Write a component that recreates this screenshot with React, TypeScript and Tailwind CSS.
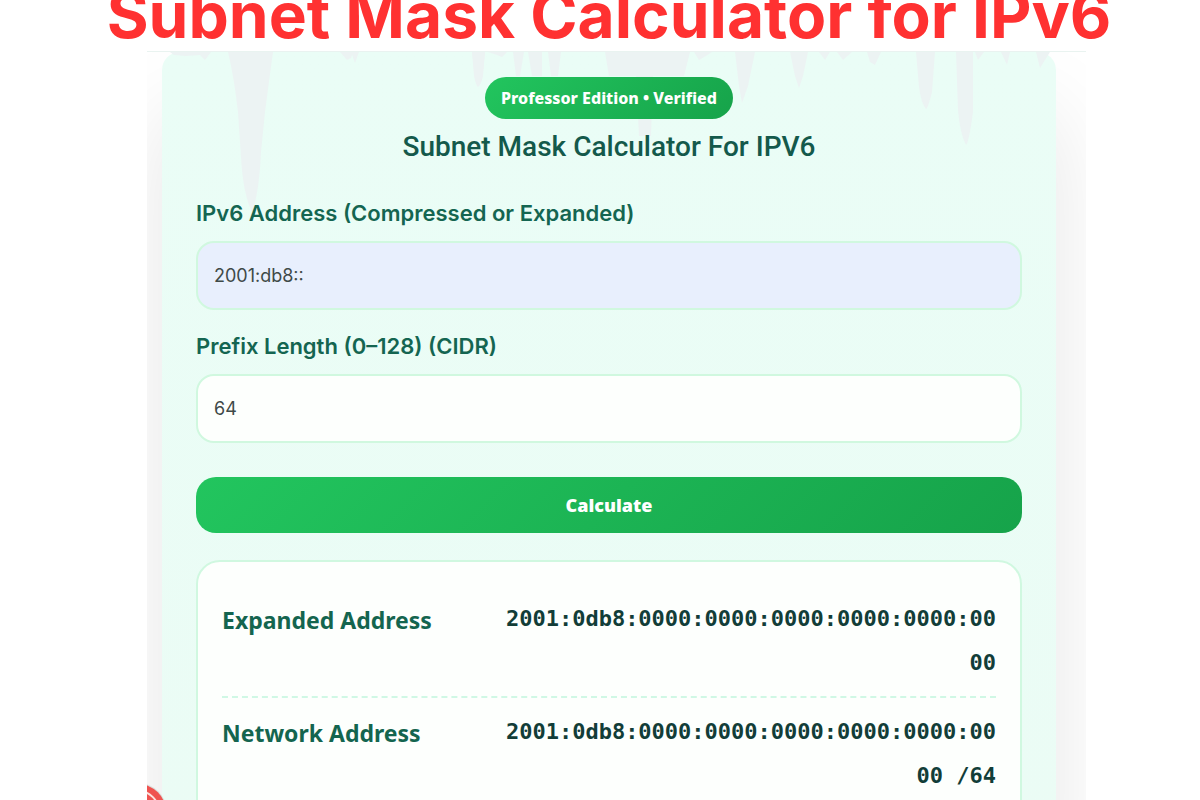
import { useState } from 'react';

const results = [
  { label: 'Expanded Address', value: '2001:0db8:0000:0000:0000:0000:0000:0000' },
  { label: 'Network Address', value: '2001:0db8:0000:0000:0000:0000:0000:0000 /64' },
];

// faint drips hanging from the top edge of the card
const drips = [
  'M66 0H111L108 22L103 60L99 100Q97 142 90 160Q81 142 79 105L76 60Q72 25 66 0Z',
  'M8 0H49L43 8L38 3L24 4L12 3Z',
  'M76 0H95L89 5Z',
  'M178 0H191L189 6L185 8Z',
  'M189 0H197L193 11Z',
  'M310 0H323L320 28L317 34L313 24Z',
  'M326 0H345L340 5L335 3Z',
  'M351 0H362L358 24L354 24Z',
  'M366 0H380V24H370Z',
  'M386 0H399L396 24H389Z',
  'M443 0H528L522 24H491L489 84H477L474 24H447Z',
  'M532 0H550L544 4L537 8Z',
  'M573 0H593L586 34L580 51L577 34Z',
  'M628 0H646L641 24L637 36L633 24Z',
  'M657 0H668L663 8Z',
  'M675 0H690L681 8Z',
  'M705 0H719L713 13L708 10Z',
  'M754 0H773L770 40Q766 56 764 57Q759 51 757 35Z',
  'M794 0H811L811 60Q807 90 804 93Q798 82 796 58Z',
  'M813 0H822L816 8Z',
  'M839 0H848L845 13Z',
  'M874 0H888L878 16Z',
];

function Field({
  id,
  label,
  value,
  tone,
  onChange,
}: {
  id: string;
  label: string;
  value: string;
  tone: string;
  onChange: (v: string) => void;
}) {
  return (
    <div>
      <label
        htmlFor={id}
        className="mb-3 block font-['Inter',sans-serif] text-[22px] leading-8 font-semibold text-[#146551]"
      >
        {label}
      </label>
      <input
        id={id}
        type="text"
        value={value}
        onChange={(e) => onChange(e.target.value)}
        className={`block h-[69px] w-full rounded-[18px] border-2 border-[#d0f8df] px-4 font-['Inter',sans-serif] text-[18px] text-[#3f4a48] outline-none ${tone}`}
      />
    </div>
  );
}

export default function App() {
  const [address, setAddress] = useState('2001:db8::');
  const [prefix, setPrefix] = useState('64');

  return (
    <div className="flex h-screen flex-col overflow-hidden bg-white">
      <header className="flex h-[51px] shrink-0 items-end justify-center overflow-hidden pl-[18px]">
        <h1 className="font-['Inter',sans-serif] text-[64px] leading-[72px] font-bold whitespace-nowrap text-[#ff3131]">
          Subnet Mask Calculator for IPv6
        </h1>
      </header>

      <main className="relative mr-[114px] ml-[147px] flex-1 overflow-hidden border-t border-[#e9f3f0] pr-[30px] pl-[15px]">
        <section className="relative min-h-full rounded-t-[18px] bg-linear-to-b from-[#eafdf6] to-[#ebfcf5] px-[34px] pt-[25px] shadow-[0_60px_90px_rgba(0,0,0,0.1)]">
          <svg className="absolute top-0 left-0 h-[170px] w-[894px]" viewBox="0 0 894 170" fill="#ecf3f3" aria-hidden="true">
            {drips.map((d) => (
              <path key={d} d={d} />
            ))}
            <path d="M219 0H232L230 24Q227 34 225 35Q223 34 221 24Z" transform="translate(91 0)" />
          </svg>

          <div className="relative flex flex-col items-center">
            <span className="flex h-[42px] items-center rounded-full bg-[linear-gradient(135deg,#22c55e,#16a34a)] px-4 font-['Noto_Sans',sans-serif] text-[16px] font-extrabold text-white">
              Professor Edition • Verified
            </span>
            <h2 className="mt-2 font-['Roboto',sans-serif] text-[28px] leading-10 font-medium text-[#14594b]">
              Subnet Mask Calculator For IPV6
            </h2>
          </div>

          <form className="relative mt-[30px]" onSubmit={(e) => e.preventDefault()}>
            <div className="space-y-5">
              <Field
                id="address"
                label="IPv6 Address (Compressed or Expanded)"
                value={address}
                tone="bg-[#e8effd]"
                onChange={setAddress}
              />
              <Field
                id="prefix"
                label="Prefix Length (0–128) (CIDR)"
                value={prefix}
                tone="bg-[#fdfffd]"
                onChange={setPrefix}
              />
            </div>
            <button
              type="submit"
              className="mt-[34px] block h-14 w-full rounded-[20px] bg-[linear-gradient(135deg,#22c55e,#16a34a)] font-['Open_Sans',sans-serif] text-[18px] font-extrabold text-white"
            >
              Calculate
            </button>
          </form>

          <dl className="relative mt-[27px] rounded-[24px] border-2 border-[#d0f8e0] bg-[#fdfffd] px-6 py-[23px]">
            {results.map((row) => (
              <div
                key={row.label}
                className="flex items-start justify-between border-b-2 border-dashed border-[#d0f8e5] pt-3 pb-[11px]"
              >
                <dt className="font-['Noto_Sans',sans-serif] text-[23px] leading-[46px] font-bold text-[#14654f]">
                  {row.label}
                </dt>
                <dd className="w-[496px] text-right font-['DejaVu_Sans_Mono',monospace] text-[22px] leading-[44px] font-bold break-all text-[#123d38]">
                  {row.value}
                </dd>
              </div>
            ))}
          </dl>
        </section>

        {/* floating round button, mostly outside of the frame */}
        <svg className="absolute bottom-0 left-0 h-6 w-6" viewBox="0 0 24 24" aria-hidden="true">
          <circle cx="-9" cy="36" r="29" fill="#bfc9c4" opacity="0.5" />
          <circle cx="-9" cy="36" r="28" fill="#ef5350" />
          <circle cx="-9" cy="36" r="21" fill="none" stroke="#fbe3df" strokeWidth="2" />
        </svg>
      </main>
    </div>
  );
}
